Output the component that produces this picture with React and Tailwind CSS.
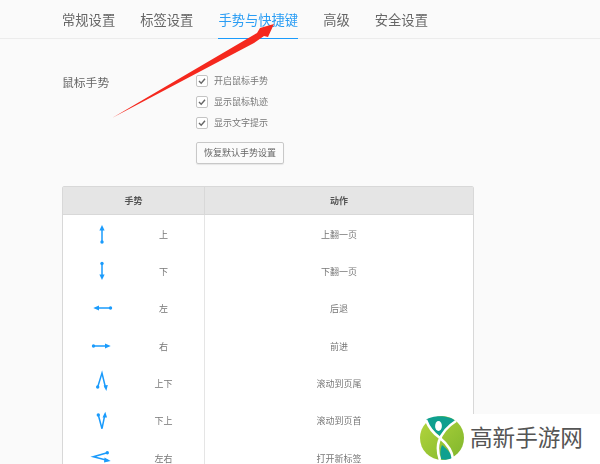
const tabs = ["常规设置", "标签设置", "手势与快捷键", "高级", "安全设置"]

const checks = ["开启鼠标手势", "显示鼠标轨迹", "显示文字提示"]

const rows = [
  { d: "M15 9V23", head: "15,6 12.4,11.5 17.6,11.5", dot: [15, 23], label: "上", action: "上翻一页" },
  { d: "M15 8V21", head: "15,24 12.4,18.5 17.6,18.5", dot: [15, 7.5], label: "下", action: "下翻一页" },
  { d: "M9 15H23", head: "6.3,15 12,12.5 12,17.5", dot: [23.5, 15], label: "左", action: "后退" },
  { d: "M7 15H21", head: "23.7,15 18,12.5 18,17.5", dot: [6.5, 15], label: "右", action: "前进" },
  { d: "M10.7 19L15 5L18.6 20", head: "19.3,23 16.6,17.5 20.8,17", dot: [10.7, 19], label: "上下", action: "滚动到页尾" },
  { d: "M11.3 10L15 23.7L18 9", head: "18.3,6.7 15.5,12.5 20,12.5", dot: [11.3, 10], label: "下上", action: "滚动到页首" },
  { d: "M20.3 10.7L6.3 14.7L21 18.4", head: "23.7,19 17.5,15.6 17,20.4", dot: [20.3, 10.7], label: "左右", action: "打开新标签" },
]

function Gesture({ row }) {
  return (
    <svg width="30" height="30" viewBox="0 0 30 30">
      <path d={row.d} fill="none" stroke="#1a9bfc" strokeWidth="1.5" />
      <polygon points={row.head} fill="#1a9bfc" />
      <circle cx={row.dot[0]} cy={row.dot[1]} r="1.7" fill="#1a9bfc" />
    </svg>
  )
}

export default function App() {
  return (
    <div className="relative h-[464px] w-[600px] overflow-hidden bg-[#fafafa] font-['Noto_Sans_CJK_SC',sans-serif] text-[#666]">
      <div className="blur-[0.5px]">
        <div className="flex h-[39px] items-end gap-[25px] border-b border-[#ececec] pl-[62px]">
          {tabs.map((tab, i) => (
            <div
              key={tab}
              className={
                "-mb-px h-[39px] pt-[8px] text-[13.3px] leading-[24px] " +
                (i === 2 ? "border-b border-[#1a9bfc] text-[#2a9df4]" : "text-[#666]")
              }
            >
              {tab}
            </div>
          ))}
        </div>

        <div className="flex pl-[62px] pt-[36px]">
          <div className="w-[134px] text-[11.8px] leading-[14px] text-[#666]">鼠标手势</div>
          <div className="flex flex-col">
            {checks.map((c) => (
              <div key={c} className="mb-[9px] flex h-[12px] items-center gap-[6px]">
                <span className="flex h-[12px] w-[12px] items-center justify-center rounded-[2px] border border-[#c4c4c4] bg-white">
                  <svg width="8" height="8" viewBox="0 0 8 8">
                    <path d="M1 4L3.2 6.2L7 1.8" fill="none" stroke="#666" strokeWidth="1.4" />
                  </svg>
                </span>
                <span className="text-[9px] leading-[12px] text-[#777]">{c}</span>
              </div>
            ))}
            <button className="mt-[4px] h-[22px] w-[88px] rounded-[2px] border border-[#c8c8c8] bg-[#fbfbfb] text-[9px] text-[#666] shadow-[0_1px_1px_rgba(0,0,0,0.08)]">
              恢复默认手势设置
            </button>
          </div>
        </div>

        <div className="ml-[62px] mt-[22px] w-[412px] rounded-t-[2px] border border-[#d8d8d8] bg-white">
          <div className="flex h-[28px] items-center border-b border-[#d8d8d8] bg-[#e5e5e5] text-[9px] font-bold text-[#555]">
            <div className="w-[141px] text-center">手势</div>
            <div className="h-full w-px bg-[#d8d8d8]" />
            <div className="flex-1 text-center">动作</div>
          </div>
          {rows.map((row) => (
            <div key={row.label} className="flex h-[37.3px] items-center text-[9px] text-[#777]">
              <div className="flex w-[141px] items-center">
                <div className="flex w-[78px] justify-center">
                  <Gesture row={row} />
                </div>
                <div className="w-[45px] pt-[2px] text-center">{row.label}</div>
              </div>
              <div className="h-full w-px bg-[#e5e5e5]" />
              <div className="flex-1 pt-[2px] text-center">{row.action}</div>
            </div>
          ))}
        </div>
      </div>

      {/* red annotation arrow drawn over the page */}
      <svg className="absolute left-0 top-0 blur-[0.3px]" width="600" height="464" viewBox="0 0 600 464">
        <polygon points="112,118 257,33 260,28 274,24 268,37 264,36 254,43" fill="#f5281e" />
      </svg>

      {/* watermark */}
      <div className="absolute bottom-0 right-0 flex h-[50px] w-[188px] items-center bg-white pl-[8px]">
        <svg className="mb-[2px]" width="44" height="44" viewBox="0 0 44 44">
          <defs>
            <linearGradient id="leaf" x1="0" y1="0" x2="1" y2="1">
              <stop offset="0" stopColor="#b5d63d" />
              <stop offset="1" stopColor="#7fb62c" />
            </linearGradient>
          </defs>
          <circle cx="22" cy="22" r="22" fill="url(#leaf)" />
          <path d="M6 4C12 -1 30 -1 35 5C29 9 24 14 20 20C14 16 9 10 6 4Z" fill="#0fa08f" />
          <ellipse cx="18.5" cy="10" rx="3.4" ry="5" fill="#fff" />
          <path d="M22 29C27 33 32 38 32 42C28 44 24 44 21 43C20 38 20 33 22 29Z" fill="#0fa08f" />
          <path d="M6 4C9 12 14 18 20 22C26 27 32 34 33 43" fill="none" stroke="#fff" strokeWidth="2.6" />
          <path d="M36 5C28 10 22 17 19 25C17 31 18 38 20 44" fill="none" stroke="#fff" strokeWidth="2.6" />
        </svg>
        <span className="mb-[3px] ml-[6px] whitespace-nowrap text-[22.6px] leading-none text-[#555]">高新手游网</span>
      </div>
    </div>
  )
}
